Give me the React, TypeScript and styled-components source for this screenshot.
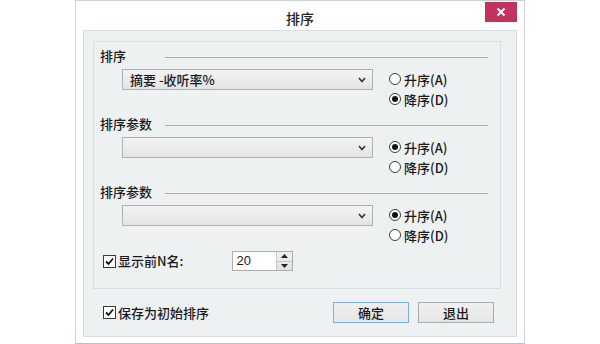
import React from 'react';
import styled, { createGlobalStyle } from 'styled-components';

const Global = createGlobalStyle`
  html, body {
    margin: 0;
    padding: 0;
    background: #ffffff;
  }
  body {
    font-family: "Noto Sans CJK SC", "Liberation Sans", sans-serif;
    font-size: 13px;
    font-weight: 500;
    color: #1a1a1a;
  }
`;

const Page = styled.div`
  width: 600px;
  height: 344px;
  display: flex;
  justify-content: center;
`;

const Window = styled.div`
  width: 450px;
  height: 344px;
  box-sizing: border-box;
  border: 1px solid #c9d3d7;
  border-bottom-color: #b9c3c7;
  background: #ffffff;
  display: flex;
  flex-direction: column;
`;

const TitleBar = styled.div`
  height: 31px;
  display: grid;
  grid-template-columns: 1fr auto 1fr;
  align-items: start;
  padding: 0 7px;
`;

const Title = styled.div`
  grid-column: 2;
  font-size: 14px;
  line-height: 14px;
  margin-top: 10px;
  color: #222;
`;

const CloseButton = styled.div`
  grid-column: 3;
  justify-self: end;
  width: 32px;
  height: 20px;
  margin-top: 1px;
  background: #c3325c;
  display: flex;
  align-items: center;
  justify-content: center;
`;

const Client = styled.div`
  flex: 1;
  margin: 0 7px 6px;
  background: #eef1f2;
  border: 1px solid #d5dde0;
  display: flex;
  flex-direction: column;
  padding: 10px 15px 13px 9px;
`;

const Panel = styled.div`
  border: 1px solid #d6dee1;
  padding: 6px 12px 17px 6px;
  display: flex;
  flex-direction: column;
`;

const Section = styled.div`
  display: flex;
  flex-direction: column;
  & + & {
    margin-top: 7px;
  }
`;

const Header = styled.div`
  height: 16px;
  display: flex;
  align-items: center;
`;

const HeaderLabel = styled.span`
  min-width: 57px;
  line-height: 16px;
`;

const HeaderRule = styled.div`
  flex: 1;
  height: 1px;
  margin-left: 8px;
  margin-top: 2px;
  background: #a3b2b8;
`;

const SortRow = styled.div`
  margin-top: 5px;
  height: 40px;
  display: flex;
  align-items: flex-start;
  padding-left: 22px;
`;

const Select = styled.div`
  width: 251px;
  height: 21px;
  box-sizing: border-box;
  border: 1px solid #adb1b4;
  background: linear-gradient(#f3f3f3, #e4e4e4);
  display: flex;
  align-items: center;
  padding: 0 6px 0 7px;
`;

const SelectText = styled.span`
  flex: 1;
  line-height: 16px;
`;

const RadioGroup = styled.div`
  margin-left: 16px;
  display: flex;
  flex-direction: column;
`;

const RadioItem = styled.div`
  height: 20px;
  display: flex;
  align-items: center;
  gap: 3px;
`;

const RadioCircle = styled.span<{ $on: boolean }>`
  width: 12px;
  height: 12px;
  box-sizing: border-box;
  border-radius: 50%;
  border: 1px solid #3c3c3c;
  background: #ffffff;
  display: flex;
  align-items: center;
  justify-content: center;
  &::after {
    content: '';
    width: 6px;
    height: 6px;
    border-radius: 50%;
    background: ${({ $on }) => ($on ? '#111' : 'transparent')};
  }
`;

const TopNRow = styled.div`
  margin-top: 6px;
  height: 20px;
  display: flex;
  align-items: center;
  padding-left: 3px;
`;

const CheckItem = styled.label`
  display: flex;
  align-items: center;
  gap: 2px;
  line-height: 16px;
`;

const CheckBox = styled.span`
  width: 13px;
  height: 13px;
  box-sizing: border-box;
  border: 1px solid #3a3a3a;
  background: #ffffff;
  display: flex;
  align-items: center;
  justify-content: center;
`;

const Spinner = styled.div`
  margin-left: 49px;
  width: 61px;
  height: 20px;
  box-sizing: border-box;
  border: 1px solid #abadb3;
  background: #ffffff;
  display: flex;
`;

const SpinValue = styled.span`
  flex: 1;
  padding-left: 3px;
  font-family: "Liberation Sans", sans-serif;
  font-size: 13px;
  font-weight: 400;
  line-height: 18px;
`;

const SpinButtons = styled.div`
  width: 15px;
  border-left: 1px solid #c4c7cc;
  display: flex;
  flex-direction: column;
  background: linear-gradient(#f2f2f2, #e2e2e2);
`;

const SpinHalf = styled.div`
  flex: 1;
  display: flex;
  align-items: center;
  justify-content: center;
  & + & {
    border-top: 1px solid #c4c7cc;
  }
`;

const Footer = styled.div`
  margin-top: 13px;
  display: flex;
  align-items: center;
  padding: 0 7px 0 10px;
`;

const Spacer = styled.div`
  flex: 1;
`;

const Button = styled.div<{ $primary?: boolean }>`
  width: 76px;
  height: 21px;
  box-sizing: border-box;
  border: 1px solid ${({ $primary }) => ($primary ? '#7ab2e8' : '#acacac')};
  background: linear-gradient(#f0f0f0, #e5e5e5);
  display: flex;
  align-items: center;
  justify-content: center;
  line-height: 16px;
  & + & {
    margin-left: 9px;
  }
`;

const Check = () => (
  <CheckBox>
    <svg width="9" height="9" viewBox="0 0 9 9">
      <path d="M1 4.5 L3.5 7 L8 1.5" fill="none" stroke="#111" strokeWidth="1.8" />
    </svg>
  </CheckBox>
);

const Chevron = () => (
  <svg width="8" height="6" viewBox="0 0 8 6">
    <path d="M1 1 L4 4.5 L7 1" fill="none" stroke="#333" strokeWidth="1.6" />
  </svg>
);

const SortSection: React.FC<{ label: string; value?: string; asc: boolean }> = ({
  label,
  value,
  asc,
}) => (
  <Section>
    <Header>
      <HeaderLabel>{label}</HeaderLabel>
      <HeaderRule />
    </Header>
    <SortRow>
      <Select>
        <SelectText>{value}</SelectText>
        <Chevron />
      </Select>
      <RadioGroup>
        <RadioItem>
          <RadioCircle $on={asc} />
          升序(A)
        </RadioItem>
        <RadioItem>
          <RadioCircle $on={!asc} />
          降序(D)
        </RadioItem>
      </RadioGroup>
    </SortRow>
  </Section>
);

const App: React.FC = () => (
  <Page>
    <Global />
    <Window>
      <TitleBar>
        <Title>排序</Title>
        <CloseButton>
          <svg width="10" height="10" viewBox="0 0 10 10">
            <path d="M1.5 1.5 L8.5 8.5 M8.5 1.5 L1.5 8.5" stroke="#fff" strokeWidth="2" />
          </svg>
        </CloseButton>
      </TitleBar>
      <Client>
        <Panel>
          <SortSection label="排序" value="摘要 -收听率%" asc={false} />
          <SortSection label="排序参数" asc />
          <SortSection label="排序参数" asc />
          <TopNRow>
            <CheckItem>
              <Check />
              显示前N名:
            </CheckItem>
            <Spinner>
              <SpinValue>20</SpinValue>
              <SpinButtons>
                <SpinHalf>
                  <svg width="7" height="4" viewBox="0 0 7 4">
                    <path d="M0 4 L3.5 0 L7 4 Z" fill="#222" />
                  </svg>
                </SpinHalf>
                <SpinHalf>
                  <svg width="7" height="4" viewBox="0 0 7 4">
                    <path d="M0 0 L3.5 4 L7 0 Z" fill="#222" />
                  </svg>
                </SpinHalf>
              </SpinButtons>
            </Spinner>
          </TopNRow>
        </Panel>
        <Footer>
          <CheckItem>
            <Check />
            保存为初始排序
          </CheckItem>
          <Spacer />
          <Button $primary>确定</Button>
          <Button>退出</Button>
        </Footer>
      </Client>
    </Window>
  </Page>
);

export default App;
